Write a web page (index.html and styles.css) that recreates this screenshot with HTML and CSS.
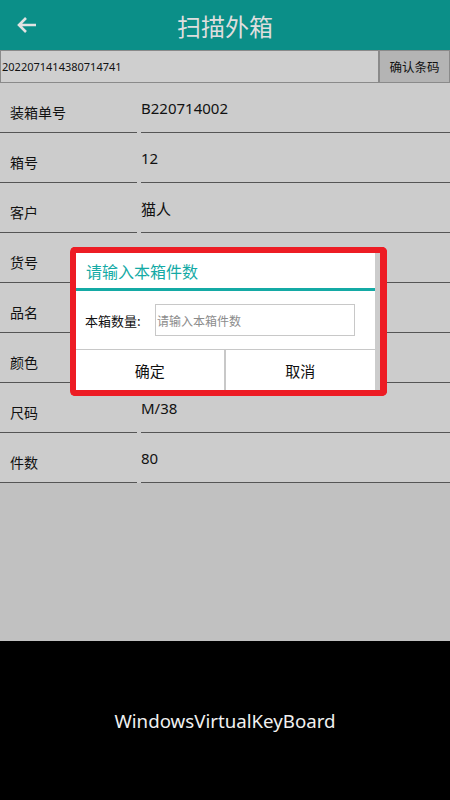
FILE: index.html
```html
<!DOCTYPE html>
<html lang="zh-CN">
<head>
    <meta charset="UTF-8">
    <meta name="viewport" content="width=device-width, initial-scale=1.0">
    <title>扫描外箱</title>
    <link rel="stylesheet" href="styles.css">
</head>
<body>
    <div class="app">
        <header class="topbar">
            <a class="back" href="#">
                <svg width="20" height="18" viewBox="0 0 20 18">
                    <path d="M19 9H2M9 2L2 9l7 7" fill="none" stroke="#e2e2e2" stroke-width="2.6"/>
                </svg>
            </a>
            <h1>扫描外箱</h1>
        </header>

        <div class="scan-bar">
            <input type="text" class="scan-input" value="2022071414380714741">
            <button class="scan-btn">确认条码</button>
        </div>

        <div class="rows">
            <div class="row"><span class="label">装箱单号</span><span class="value">B220714002</span></div>
            <div class="row"><span class="label">箱号</span><span class="value">12</span></div>
            <div class="row"><span class="label">客户</span><span class="value">猫人</span></div>
            <div class="row"><span class="label">货号</span><span class="value"></span></div>
            <div class="row"><span class="label">品名</span><span class="value"></span></div>
            <div class="row"><span class="label">颜色</span><span class="value"></span></div>
            <div class="row"><span class="label">尺码</span><span class="value">M/38</span></div>
            <div class="row"><span class="label">件数</span><span class="value">80</span></div>
        </div>

        <div class="filler"></div>

        <div class="keyboard">WindowsVirtualKeyBoard</div>

        <div class="highlight">
            <div class="dialog">
                <div class="dialog-title">请输入本箱件数</div>
                <div class="dialog-body">
                    <label for="qty">本箱数量:</label>
                    <input type="text" id="qty" placeholder="请输入本箱件数">
                </div>
                <div class="dialog-actions">
                    <button>确定</button>
                    <button>取消</button>
                </div>
            </div>
        </div>
    </div>
</body>
</html>
```

FILE: styles.css
```css
body {
    margin: 0;
    padding: 0;
    font-family: "Noto Sans", "Noto Sans CJK SC", sans-serif;
    background-color: #000;
}

.app {
    position: relative;
    width: 450px;
    height: 800px;
    display: flex;
    flex-direction: column;
    background-color: #cccccc;
    overflow: hidden;
}

.topbar {
    height: 50px;
    background-color: #0b8f88;
    display: flex;
    align-items: center;
    justify-content: center;
    position: relative;
}

.topbar h1 {
    margin: 0;
    font-size: 24px;
    font-weight: normal;
    color: #dedede;
}

.back {
    position: absolute;
    left: 17px;
    top: 16px;
    display: flex;
}

.scan-bar {
    display: flex;
    height: 33px;
}

.scan-input {
    flex: 1;
    min-width: 0;
    margin: 0;
    padding: 0 0 0 1px;
    border: 1px solid #8a8a8a;
    border-right: none;
    background-color: #cfcfcf;
    font-family: "Noto Sans", sans-serif;
    font-size: 11px;
    color: #111;
    outline: none;
}

.scan-btn {
    width: 72px;
    margin: 0;
    padding: 0;
    border: 1px solid #8a8a8a;
    border-left: 2px solid #8a8a8a;
    background-color: #b4b4b4;
    font-family: "Noto Sans CJK SC", sans-serif;
    font-size: 12.5px;
    color: #111;
}

.rows {
    display: flex;
    flex-direction: column;
}

.row {
    height: 50px;
    display: grid;
    grid-template-columns: 137px 1fr;
    column-gap: 4px;
    background:
        linear-gradient(#555, #555) left bottom / 137px 1px no-repeat,
        linear-gradient(#555, #555) 141px bottom / 309px 1px no-repeat;
}

.label {
    padding-left: 10px;
    padding-top: 19px;
    font-family: "Noto Sans CJK SC", sans-serif;
    font-size: 14px;
    color: #111;
}

.value {
    padding-top: 15px;
    font-family: "Noto Sans", "Noto Sans CJK SC", sans-serif;
    font-size: 15px;
    color: #111;
}

.filler {
    flex: 1;
    background-color: #c1c1c1;
}

.keyboard {
    height: 159px;
    background-color: #000;
    color: #f0f0f0;
    font-family: "Noto Sans", sans-serif;
    font-size: 18.7px;
    display: flex;
    align-items: center;
    justify-content: center;
}

/* red annotation frame around the dialog */
.highlight {
    position: absolute;
    left: 70px;
    top: 247px;
    width: 299px;
    height: 137px;
    border: 6px solid #ed1c24;
    border-right-width: 0;
    padding-right: 12px;
    border-radius: 5px;
    background-color: #cccccc;
    display: flex;
}

.highlight::after {
    content: "";
    position: absolute;
    right: 0;
    top: -6px;
    bottom: -6px;
    width: 7px;
    background-color: #ed1c24;
    border-radius: 0 5px 5px 0;
}

.dialog {
    width: 299px;
    background-color: #fff;
    display: flex;
    flex-direction: column;
    border-radius: 0 0 3px 0;
}

.dialog-title {
    height: 35px;
    padding-left: 10px;
    display: flex;
    align-items: center;
    border-bottom: 3px solid #14aaa5;
    font-family: "Noto Sans CJK SC", sans-serif;
    font-size: 16px;
    color: #14aaa5;
}

.dialog-body {
    height: 58px;
    display: flex;
    align-items: center;
    padding-left: 9px;
    border-bottom: 1px solid #c8c8c8;
}

.dialog-body label {
    width: 70px;
    font-family: "Noto Sans CJK SC", sans-serif;
    font-size: 13px;
    color: #111;
}

.dialog-body input {
    width: 200px;
    height: 32px;
    box-sizing: border-box;
    margin: 0;
    padding: 0 0 0 1px;
    border: 1px solid #c8c8c8;
    font-family: "Noto Sans CJK SC", sans-serif;
    font-size: 12px;
    outline: none;
}

.dialog-body input::placeholder {
    color: #8c8c8c;
}

.dialog-actions {
    flex: 1;
    display: grid;
    grid-template-columns: 1fr 1fr;
}

.dialog-actions button {
    margin: 0;
    padding: 0;
    border: none;
    background-color: #fff;
    font-family: "Noto Sans CJK SC", sans-serif;
    font-size: 15px;
    color: #111;
}

.dialog-actions button:first-child {
    border-right: 2px solid #c8c8c8;
}
```
